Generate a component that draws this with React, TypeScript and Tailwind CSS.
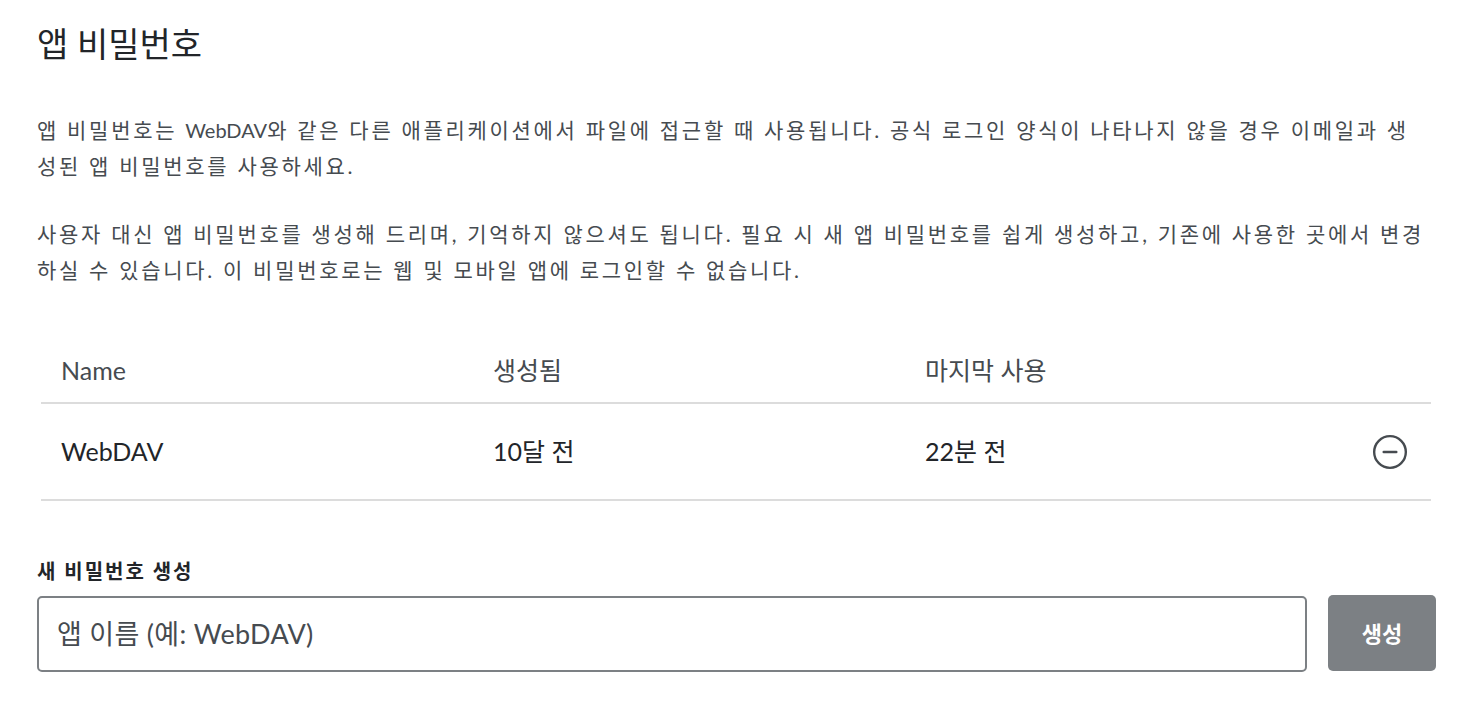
import React from "react";

const font = { fontFamily: 'Lato, "Noto Sans CJK KR", sans-serif' };

export default function App() {
  return (
    <div className="min-h-screen bg-white" style={font}>
      <div className="pl-[37px] pr-[30px] pt-[22px]">
        <h1 className="text-[34px] leading-[44px] text-[#222529] font-normal">앱 비밀번호</h1>
        <div className="pr-[6px]">
          <p className="mt-[46px] text-[21px] leading-[36px] tracking-[2.7px] text-[#464b50]">
            앱 비밀번호는 <span className="tracking-normal text-[20px]">WebDAV</span>와 같은 다른 애플리케이션에서 파일에 접근할 때 사용됩니다. 공식 로그인 양식이 나타나지 않을 경우 이메일과 생성된 앱 비밀번호를 사용하세요.
          </p>
          <p className="mt-[32px] text-[21px] leading-[36px] tracking-[2.7px] text-[#464b50]">
            사용자 대신 앱 비밀번호를 생성해 드리며, 기억하지 않으셔도 됩니다. 필요 시 새 앱 비밀번호를 쉽게 생성하고, 기존에 사용한 곳에서 변경하실 수 있습니다. 이 비밀번호로는 웹 및 모바일 앱에 로그인할 수 없습니다.
          </p>
        </div>
        <div className="mt-[52px] ml-[4px] mr-[5px]">
          <div className="grid grid-cols-[432px_432px_1fr_80px] items-center h-[64px] border-b-2 border-[#dcdcdc] text-[25px] text-[#464b50]">
            <div className="pl-[20px]">Name</div>
            <div className="pl-[20px]">생성됨</div>
            <div className="pl-[20px]">마지막 사용</div>
            <div />
          </div>
          <div className="grid grid-cols-[432px_432px_1fr_80px] items-center h-[97px] border-b-2 border-[#dcdcdc] text-[25px] text-[#222529]">
            <div className="pl-[20px]">WebDAV</div>
            <div className="pl-[20px]">10달 전</div>
            <div className="pl-[20px]">22분 전</div>
            <div className="flex justify-end pr-[22px]">
              <svg width="38" height="38" viewBox="0 0 24 24" fill="none" stroke="#464b50" strokeWidth="1.5" strokeLinecap="round">
                <circle cx="12" cy="12" r="10" />
                <line x1="8" y1="12" x2="16" y2="12" />
              </svg>
            </div>
          </div>
        </div>
        <div className="mt-[56px] text-[20px] leading-[28px] tracking-[2px] font-bold text-[#222529]">새 비밀번호 생성</div>
        <div className="mt-[11px] flex items-center gap-[21px]">
          <div className="flex-1 h-[76px] border-2 border-[#7c8084] rounded-[5px] flex items-center pl-[18px] text-[27px] tracking-[0.3px] text-[#464b50]">
            앱 이름 (예: WebDAV)
          </div>
          <button className="w-[108px] h-[76px] -mt-[2px] rounded-[5px] bg-[#7c8084] text-white text-[22px] font-bold">생성</button>
        </div>
      </div>
    </div>
  );
}
